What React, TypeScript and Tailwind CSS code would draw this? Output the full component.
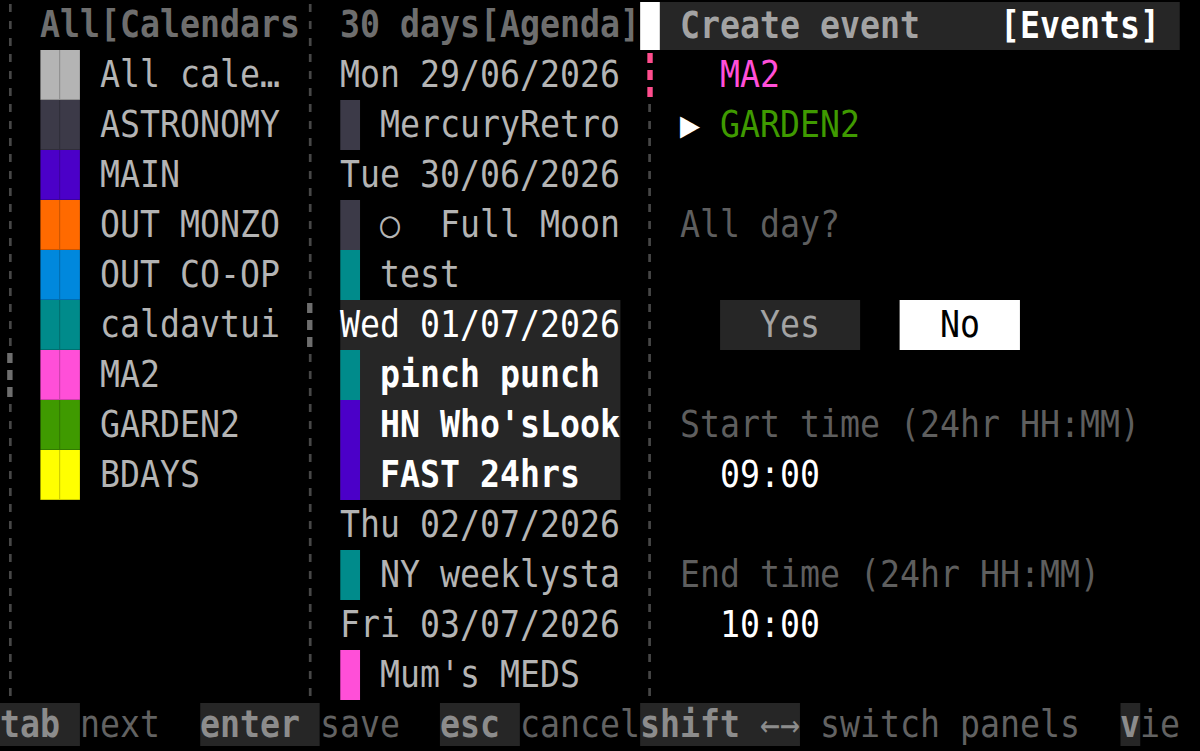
import React from "react";

type Dash = "thin" | "thick" | "pink" | "white";

// One terminal cell wide column of dashed box-drawing segments.
function VLine({ rows }: { rows: Dash[] }) {
  return (
    <div className="flex w-[1ch] flex-col">
      {rows.map((d, i) =>
        d === "white" ? (
          <div key={i} className="h-[50px] pt-[2px]">
            <div className="h-[48px] w-full bg-white" />
          </div>
        ) : (
          <div key={i} className="flex h-[50px] flex-col items-center justify-around">
            {[0, 1, 2].map((k) => (
              <div
                key={k}
                className={
                  d === "thin"
                    ? "h-[8px] w-[3px] bg-[#474747]"
                    : d === "thick"
                    ? "h-[10px] w-[6px] bg-[#6e6e6e]"
                    : "h-[10px] w-[6px] bg-[#ff4d8d]"
                }
              />
            ))}
          </div>
        )
      )}
    </div>
  );
}

function lineRows(thick: number): Dash[] {
  return Array.from({ length: 14 }, (_, i) => (i === thick ? "thick" : "thin"));
}

const calendars: { name: string; color: string }[] = [
  { name: "All cale…", color: "bg-[#b4b4b4]" },
  { name: "ASTRONOMY", color: "bg-[#3c3a48]" },
  { name: "MAIN", color: "bg-[#4b00c8]" },
  { name: "OUT MONZO", color: "bg-[#ff6a00]" },
  { name: "OUT CO-OP", color: "bg-[#0088dd]" },
  { name: "caldavtui", color: "bg-[#008b8b]" },
  { name: "MA2", color: "bg-[#ff4fd8]" },
  { name: "GARDEN2", color: "bg-[#3f9a00]" },
  { name: "BDAYS", color: "bg-[#ffff00]" },
];

type AgendaRow =
  | { kind: "date"; text: string; hl?: boolean }
  | { kind: "event"; text: string; color: string; hl?: boolean };

const agenda: AgendaRow[] = [
  { kind: "date", text: "Mon 29/06/2026" },
  { kind: "event", text: "MercuryRetro", color: "bg-[#3c3a48]" },
  { kind: "date", text: "Tue 30/06/2026" },
  { kind: "event", text: "○  Full Moon", color: "bg-[#3c3a48]" },
  { kind: "event", text: "test", color: "bg-[#008b8b]" },
  { kind: "date", text: "Wed 01/07/2026", hl: true },
  { kind: "event", text: "pinch punch", color: "bg-[#008b8b]", hl: true },
  { kind: "event", text: "HN Who'sLook", color: "bg-[#4b00c8]", hl: true },
  { kind: "event", text: "FAST 24hrs", color: "bg-[#4b00c8]", hl: true },
  { kind: "date", text: "Thu 02/07/2026" },
  { kind: "event", text: "NY weeklysta", color: "bg-[#008b8b]" },
  { kind: "date", text: "Fri 03/07/2026" },
  { kind: "event", text: "Mum's MEDS", color: "bg-[#ff4fd8]" },
];

function CalendarsPanel() {
  return (
    <div className="flex w-[14ch] flex-col">
      <div className="h-[50px] whitespace-pre font-bold text-[#6e6e6e]"> All[Calendars</div>
      {calendars.map((c) => (
        <div key={c.name} className="flex h-[50px]">
          <div className="w-[1ch]" />
          <div className={"flex w-[2ch] border-b border-black/20 " + c.color}>
            <div className="w-[1ch] border-r border-black/25" />
          </div>
          <div className="w-[1ch]" />
          <div className="whitespace-pre text-[#b4b4b4]">{c.name}</div>
        </div>
      ))}
    </div>
  );
}

function AgendaPanel() {
  return (
    <div className="flex w-[16ch] flex-col">
      <div className="h-[50px] whitespace-pre font-bold text-[#6e6e6e]"> 30 days[Agenda]</div>
      {agenda.map((r, i) => (
        <div key={i} className="flex h-[50px]">
          <div className="w-[1ch]" />
          <div
            className={
              "flex w-[14ch] whitespace-pre " +
              (r.hl ? "bg-[#262626] text-white" : "text-[#b4b4b4]")
            }
          >
            {r.kind === "date" ? (
              <span>{r.text}</span>
            ) : (
              <>
                <div className={"h-[50px] w-[1ch] " + r.color} />
                <div className="w-[1ch]" />
                <span className={r.hl ? "font-bold" : ""}>{r.text}</span>
              </>
            )}
          </div>
        </div>
      ))}
    </div>
  );
}

function EventsPanel() {
  const blank = <div className="h-[50px]" />;
  return (
    <div className="flex w-[27ch] flex-col whitespace-pre">
      <div className="h-[50px] pt-[2px]">
        <div className="flex h-[48px] w-[26ch] items-center bg-[#262626] font-bold">
          <span className="text-[#a3a3a3]"> Create event    </span>
          <span className="text-white">[Events]</span>
        </div>
      </div>
      <div className="h-[50px] text-[#ff4fd8]">   MA2</div>
      <div className="h-[50px]">
        <span className="text-white"> ▶ </span>
        <span className="text-[#3f9a00]">GARDEN2</span>
      </div>
      {blank}
      <div className="h-[50px] text-[#5e5e5e]"> All day?</div>
      {blank}
      <div className="flex h-[50px]">
        <div className="w-[3ch]" />
        <div className="w-[7ch] bg-[#262626] text-center text-[#a3a3a3]">Yes</div>
        <div className="w-[2ch]" />
        <div className="w-[6ch] bg-white text-center text-black">No</div>
      </div>
      {blank}
      <div className="h-[50px] text-[#5e5e5e]"> Start time (24hr HH:MM)</div>
      <div className="h-[50px] text-white">   09:00</div>
      {blank}
      <div className="h-[50px] text-[#5e5e5e]"> End time (24hr HH:MM)</div>
      <div className="h-[50px] text-white">   10:00</div>
      {blank}
    </div>
  );
}

function Key({ k, rest = " " }: { k: string; rest?: string }) {
  return (
    <span className="bg-[#262626] text-[#8c8c8c]">
      <span className="font-bold">{k}</span>
      {rest}
    </span>
  );
}

function StatusBar() {
  return (
    <div className="h-[50px] whitespace-pre text-[#626262]">
      <Key k="tab" />
      <span>next  </span>
      <Key k="enter" />
      <span>save  </span>
      <Key k="esc" />
      <span>cancel</span>
      <Key k="shift" rest=" ←→" />
      <span> switch panels  </span>
      <Key k="v" rest="" />
      <span>ie</span>
    </div>
  );
}

export default function App() {
  const rightBorder: Dash[] = Array.from({ length: 14 }, (_, i) =>
    i === 0 ? "white" : i === 1 ? "pink" : "thin"
  );
  return (
    <div className="h-[751px] w-[1200px] overflow-hidden bg-black">
      <div className="h-[751px] w-[60ch] origin-top-left scale-x-[0.89783] font-['DejaVu_Sans_Mono',monospace] text-[37px] leading-[50px] text-[#b4b4b4]">
        <div className="flex h-[700px]">
          <VLine rows={lineRows(7)} />
          <CalendarsPanel />
          <VLine rows={lineRows(6)} />
          <AgendaPanel />
          <VLine rows={rightBorder} />
          <EventsPanel />
        </div>
        <StatusBar />
      </div>
    </div>
  );
}
